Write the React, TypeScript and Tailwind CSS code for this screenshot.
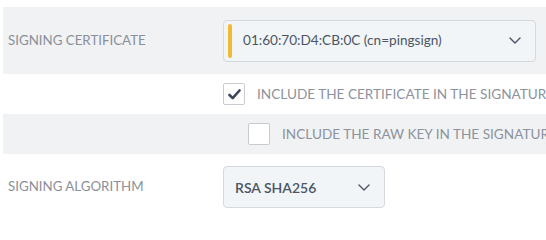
import React from "react";

const Chevron = () => (
  <svg width="12" height="7" viewBox="0 0 12 7" fill="none">
    <path d="M1 1l5 5 5-5" stroke="#4b5563" strokeWidth="1.4" strokeLinecap="round" strokeLinejoin="round" />
  </svg>
);

const Check = () => (
  <svg width="13" height="11" viewBox="0 0 13 11" fill="none">
    <path d="M1.5 6l3.2 3.2 6.8-7.7" stroke="#3b4758" strokeWidth="2.6" strokeLinecap="round" strokeLinejoin="round" />
  </svg>
);

export default function App() {
  const font = { fontFamily: "Lato, 'Open Sans', sans-serif" };
  return (
    <div className="w-[546px] h-[227px] bg-white overflow-hidden pt-[7px] pl-[3px]" style={font}>
      <div className="flex items-center h-[67px] bg-[#f0f2f4]">
        <div className="w-[220px] pl-[5px] text-[13.3px] text-[#8a9099]">SIGNING CERTIFICATE</div>
        <div className="flex items-center w-[313px] h-[42px] border border-[#d5d9de] rounded-[4px] bg-[#f2f5f7] pl-[4px] pr-[14px]">
          <div className="w-[4px] h-[34px] rounded-full bg-[#f2b933]" />
          <div className="flex-1 pl-[11px] text-[13.6px] text-[#4b5563] whitespace-nowrap">01:60:70:D4:CB:0C (cn=pingsign)</div>
          <Chevron />
        </div>
      </div>
      <div className="flex items-center h-[40px] pl-[220px] whitespace-nowrap overflow-hidden">
        <div className="w-[22px] h-[22px] shrink-0 border border-[#c8ccd1] rounded-[2px] bg-white flex items-center justify-center">
          <Check />
        </div>
        <div className="pl-[12px] text-[13.6px] text-[#8d939c]">INCLUDE THE CERTIFICATE IN THE SIGNATURE</div>
      </div>
      <div className="flex items-center h-[40px] pl-[245px] bg-[#f0f2f4] whitespace-nowrap overflow-hidden">
        <div className="w-[22px] h-[22px] shrink-0 border border-[#c8ccd1] rounded-[2px] bg-white" />
        <div className="pl-[12px] text-[13.6px] text-[#8d939c]">INCLUDE THE RAW KEY IN THE SIGNATURE</div>
      </div>
      <div className="flex items-center h-[66px]">
        <div className="w-[220px] pl-[5px] text-[13.3px] text-[#8a9099]">SIGNING ALGORITHM</div>
        <div className="flex items-center w-[162px] h-[42px] border border-[#d5d9de] rounded-[4px] bg-[#f2f5f7] pl-[11px] pr-[14px]">
          <div className="flex-1 text-[14px] font-semibold text-[#4b5563]">RSA SHA256</div>
          <Chevron />
        </div>
      </div>
    </div>
  );
}
